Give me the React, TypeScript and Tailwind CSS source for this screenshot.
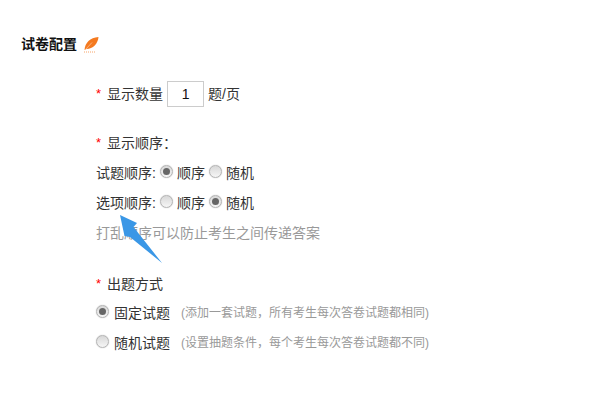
const font = "font-['Liberation_Sans','Noto_Sans_CJK_SC',sans-serif]";

function Radio({ on }: { on?: boolean }) {
  return (
    <span className="inline-flex items-center justify-center w-[13px] h-[13px] rounded-full border border-[#b5b5b5] bg-gradient-to-b from-[#d8d8d8] to-[#f6f6f6] shadow-[0_0_1px_#aaa] shrink-0">
      {on && <span className="block w-[7px] h-[7px] rounded-full bg-[#666]" />}
    </span>
  );
}

function Star() {
  return <span className="text-[#f00] mr-[6px] text-[13px]">*</span>;
}

function Option({ on, label }: { on?: boolean; label: string }) {
  return (
    <span className="inline-flex items-center gap-[4px] mr-[4px]">
      <span className="-mt-[3px] flex"><Radio on={on} /></span>
      <span>{label}</span>
    </span>
  );
}

export default function App() {
  return (
    <div className={`relative w-[600px] h-[400px] overflow-hidden bg-white text-[14px] leading-[20px] text-[#333] ${font}`}>
      <div className="flex items-center pl-[21px] pt-[33px] h-[55px]">
        <span className="font-bold text-[14px] text-[#111]">试卷配置</span>
        <svg className="ml-[7px]" width="15" height="17" viewBox="0 0 15 17">
          <path d="M0.5 14 C1 7 6 1.5 14.5 1 C14 7.5 9 13 2.5 13 Z" fill="#f47a20" />
          <path d="M1.5 13.5 L8 6.5" stroke="#ffd9bd" strokeWidth="0.6" />
          <path d="M0 16 H11" stroke="#f7a468" strokeWidth="1" strokeDasharray="1 1" />
        </svg>
      </div>

      <div className="pl-[96px] pt-[26px] flex flex-col">
        <div className="flex items-center h-[26px]">
          <Star />
          <span>显示数量</span>
          <span className="mx-[4px] flex items-center justify-center w-[37px] h-[26px] border border-[#ccc] text-[#111] text-[14px]">1</span>
          <span>题/页</span>
        </div>

        <div className="flex items-center h-[20px] mt-[26px]">
          <Star />
          <span>显示顺序：</span>
        </div>
        <div className="flex items-center h-[20px] mt-[10px]">
          <span className="mr-[4px]">试题顺序:</span>
          <Option on label="顺序" />
          <Option label="随机" />
        </div>
        <div className="flex items-center h-[20px] mt-[10px]">
          <span className="mr-[4px]">选项顺序:</span>
          <Option label="顺序" />
          <Option on label="随机" />
        </div>
        <div className="h-[20px] mt-[10px] text-[#999]">打乱顺序可以防止考生之间传递答案</div>

        <div className="flex items-center h-[20px] mt-[31px]">
          <Star />
          <span>出题方式</span>
        </div>
        <div className="flex items-center h-[20px] mt-[9px]">
          <span className="-mt-[3px] flex mr-[5px]"><Radio on /></span>
          <span>固定试题</span>
          <span className="ml-[11px] text-[12px] text-[#999]">(添加一套试题，所有考生每次答卷试题都相同)</span>
        </div>
        <div className="flex items-center h-[20px] mt-[10px]">
          <span className="-mt-[3px] flex mr-[5px]"><Radio /></span>
          <span>随机试题</span>
          <span className="ml-[11px] text-[12px] text-[#999]">(设置抽题条件，每个考生每次答卷试题都不同)</span>
        </div>
      </div>

      <svg className="absolute left-[118px] top-[213px]" width="46" height="52" viewBox="0 0 46 52">
        <path d="M2 2 L19 10 L15.5 14 L44 50 L12 24 L6.5 23 Z" fill="#3a97e6" />
      </svg>
    </div>
  );
}
